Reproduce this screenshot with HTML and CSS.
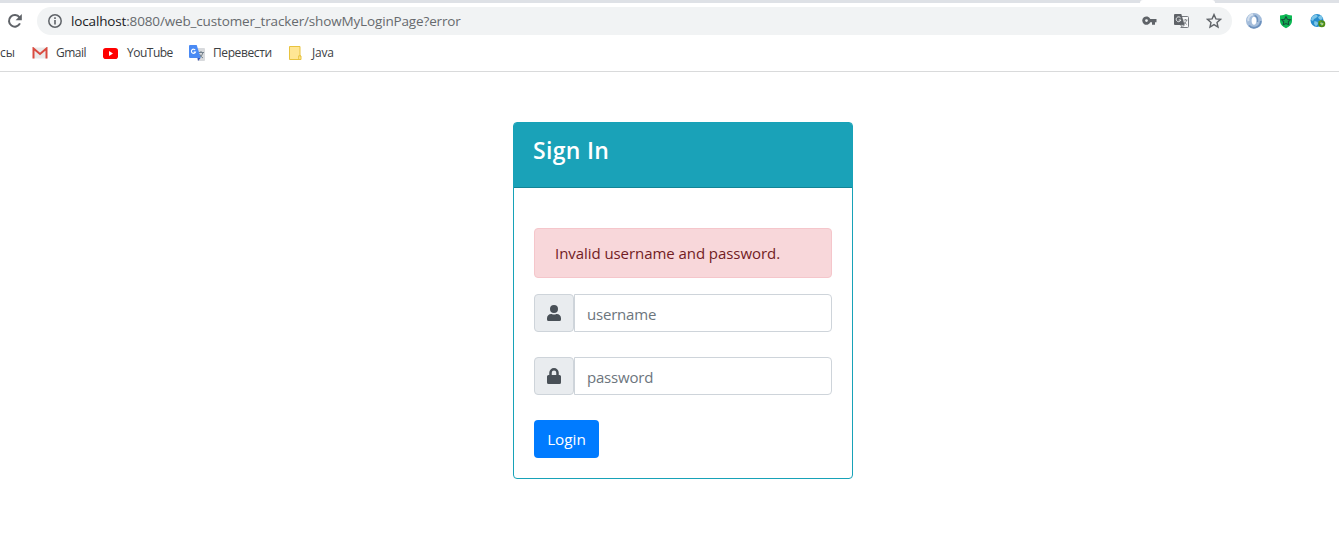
FILE: index.html
```html
<!DOCTYPE html>
<html lang="en">
<head>
<meta charset="utf-8">
<title>Sign In</title>
<link rel="stylesheet" href="styles.css">
</head>
<body>
<header class="browser">
  <div class="tabs"><span class="active-tab"></span></div>
  <div class="toolbar">
    <svg class="reload" width="16" height="16" viewBox="0 0 16 16"><path d="M13 10.4A5.800 5.800 0 1 1 12.500 4.400" fill="none" stroke="#5f6368" stroke-width="2"/><path d="M14.800 1v6.200H8.600z" fill="#5f6368"/></svg>
    <div class="omnibox">
      <svg class="info" width="14" height="14" viewBox="0 0 14 14"><circle cx="7" cy="7" r="6.200" fill="none" stroke="#5f6368" stroke-width="1.500"/><path d="M6.200 6h1.600v4.600H6.200zM6.200 3.300h1.600v1.600H6.200z" fill="#5f6368"/></svg>
      <span class="url"><span class="host">localhost</span>:8080/web_customer_tracker/showMyLoginPage?error</span>
      <div class="actions">
        <svg width="15" height="14" viewBox="0 0 15 14"><path fill="#5f6368" fill-rule="evenodd" d="M8.300 5a4.200 4.200 0 1 0 0 3.200H10v2.600h3V8.200h1.500V5zM4.500 5.200a1.400 1.400 0 1 1 0 2.800 1.400 1.400 0 0 1 0-2.800z"/></svg>
        <svg width="15" height="14" viewBox="0 0 15 14"><path d="M7 2.500h6.500q1 0 1 1v9q0 1-1 1H6.500" fill="#f7f8f9" stroke="#777b80"/><path d="M1 0h6.300l3.300 11H1q-1 0-1-1V1q0-1 1-1z" fill="#5f6368"/><path d="M6.500 3.800A2.400 2.400 0 1 0 6.900 6H4.700" fill="none" stroke="#f1f3f4"/><path d="M9.500 6h4M11.500 5v1M12.700 6q-.7 2.500-2.500 4M10 7.500q1 2 2.900 3M6.800 11h3.500L8 13.500z" fill="none" stroke="#777b80" stroke-width=".8"/></svg>
        <svg width="16" height="16" viewBox="0 0 16 16"><path d="M8 1.600l1.900 4.300 4.600.4L11 9.400l1 4.600-4-2.400L4 14l1-4.600-3.500-3.100 4.600-.4z" fill="none" stroke="#5f6368" stroke-width="1.400"/></svg>
      </div>
    </div>
    <div class="extensions">
      <svg width="16" height="16" viewBox="0 0 16 16"><path fill="#a4bddb" fill-rule="evenodd" d="M8 0a8 7.800 0 1 0 0 15.600A8 7.800 0 0 0 8 0zm0 3.800c3.200 0 3.200 8 0 8s-3.200-8 0-8z"/><path d="M3 12.500A6.800 6.800 0 0 0 14.800 8" fill="none" stroke="#6d91bd" stroke-width="1.800"/><path d="M7 1.600a5 5 0 0 0-4.500 6.500" fill="none" stroke="#d2dfee" stroke-width="2"/><path d="M8.500 2.500q3.800 1 3 6.500" fill="none" stroke="#6e92bd" stroke-width="1.400"/></svg>
      <svg width="14" height="16" viewBox="0 0 14 16"><path d="M1 2.500Q5 2.200 7 1q2 1.200 6 1.500V8q0 4.500-6 7.300Q1 12.500 1 8z" fill="#0db954"/><path d="M7 3.700l1.400 2.500 2.900.5-2 2.100.4 2.900L7 10.500l-2.700 1.200.4-2.900-2-2.100 2.900-.5z" fill="#13a951" stroke="#164f3b" stroke-width="1.100"/></svg>
      <svg width="16" height="16" viewBox="0 0 16 16"><circle cx="7" cy="7.500" r="6.500" fill="#268ccd"/><path d="M2 3.500l4-2 2 1.500-2 2-2 1-1 2-2-1zM8 4l3-2 2 3-2 2-2-1zM4.500 8l3 1 .5 2-2 2.300-2-2.300z" fill="#7ec6e8"/><circle cx="11.800" cy="10.700" r="2.500" fill="none" stroke="#4d8c16" stroke-width="2"/><path d="M8 8.500l3-1.500v3z" fill="#629e20"/><path d="M10.500 10l2.500 1.500" stroke="#b4d765" stroke-width="1.500"/></svg>
    </div>
  </div>
  <nav class="bookmarks">
    <span class="label cut">сы</span>
    <svg class="gmail" width="16" height="12" viewBox="0 0 16 12"><path d="M1 .5h14v11H1z" fill="#eaeaea"/><path d="M1.500 11.500V1.500L8 7l6.500-5.500v10" fill="none" stroke="#d94b40" stroke-width="2"/></svg>
    <span class="label w-gmail">Gmail</span>
    <svg class="youtube" width="15" height="11" viewBox="0 0 15 11"><rect width="15" height="11" rx="2.800" fill="#f00"/><path d="M6 3l4 2.500L6 8z" fill="#fff"/></svg>
    <span class="label w-youtube">YouTube</span>
    <svg class="translate" width="16" height="16" viewBox="0 0 16 16"><path d="M6 3h9q1 0 1 1v11q0 1-1 1H9z" fill="#d8dadd"/><path d="M9.500 7.500H15M12 6v1.500M14 7.500q-1 4-4 5.500M10.500 9q1 2.500 3.500 4" fill="none" stroke="#73818c"/><path d="M8.500 13h3L9 16z" fill="#3755b5"/><path d="M1 0h6.700l4 13H1q-1 0-1-1V1q0-1 1-1z" fill="#4a8af4"/><path d="M6.200 5A2.100 2.100 0 1 0 6.500 7H4.700" fill="none" stroke="#fff" stroke-width="1.100"/></svg>
    <span class="label w-translate">Перевести</span>
    <svg class="folder" width="13" height="14" viewBox="0 0 13 14"><path d="M.5.500h10.500v9.500h1v3.500H.5z" fill="#ffe694" stroke="#e8c33f"/><path d="M9.700 13V9.800H12" fill="none" stroke="#e8c33f"/></svg>
    <span class="label w-java">Java</span>
  </nav>
</header>
<main class="page">
  <section class="card">
    <div class="card-header"><h1 class="title">Sign In</h1></div>
    <form class="card-body">
      <div class="alert"><span class="alert-text">Invalid username and password.</span></div>
      <label class="group">
        <span class="addon"><svg width="14" height="16" viewBox="0 0 448 512"><path fill="#495057" d="M224 256a128 128 0 1 0 0-256 128 128 0 0 0 0 256zm90 32h-17a174 174 0 0 1-146 0h-17A134 134 0 0 0 0 422v42a48 48 0 0 0 48 48h352a48 48 0 0 0 48-48v-42a134 134 0 0 0-134-134z"/></svg></span>
        <input class="field user" type="text" placeholder="username">
      </label>
      <label class="group">
        <span class="addon"><svg width="14" height="16" viewBox="0 0 448 512"><path fill="#495057" fill-rule="evenodd" d="M400 224h-24v-72a152 152 0 0 0-304 0v72H48a48 48 0 0 0-48 48v192a48 48 0 0 0 48 48h352a48 48 0 0 0 48-48V272a48 48 0 0 0-48-48zm-104 0H152v-72a72 72 0 0 1 144 0z"/></svg></span>
        <input class="field pass" type="password" placeholder="password">
      </label>
      <button class="login" type="button"><span class="login-text">Login</span></button>
    </form>
  </section>
</main>
</body>
</html>
```
FILE: styles.css
```css
* { box-sizing: border-box; }
body { margin: 0; height: 533px; overflow: hidden; background: #fff; font-family: "Open Sans", "Noto Sans", sans-serif; }
svg { display: block; flex: none; }
.browser { height: 72px; border-bottom: 1px solid #d9dadb; }
.tabs { height: 3px; padding-left: 1140px; background: #dee1e6; }
.active-tab { display: block; width: 75px; height: 3px; background: #fff; border-radius: 3px 3px 0 0; }
.toolbar { display: flex; align-items: center; height: 36px; padding-left: 7px; }
.omnibox { display: flex; align-items: center; width: 1195px; height: 28px; margin-left: 14px; padding: 0 10px 0 11px; background: #f1f3f4; border-radius: 14px; }
.url { margin-left: 9px; font-size: 13.5px; letter-spacing: -0.15px; color: #666a6e; white-space: nowrap; }
.host { color: #202124; }
.actions { display: flex; align-items: center; gap: 17px; margin-left: auto; }
.extensions { display: flex; align-items: center; gap: 17px; margin-left: 14px; }
.bookmarks { display: flex; align-items: center; height: 28px; }
.label { font-size: 12px; line-height: 16px; color: #3c4043; white-space: nowrap; }
.cut { width: 15px; margin-left: 0; }
.gmail { margin-left: 17px; }
.w-gmail { width: 31px; margin-left: 8px; letter-spacing: -0.5px; }
.youtube { margin-left: 16px; }
.w-youtube { width: 47px; margin-left: 9px; letter-spacing: -0.5px; }
.translate { margin-left: 15px; }
.w-translate { width: 60px; margin-left: 8px; letter-spacing: -0.4px; }
.folder { margin-left: 16px; }
.w-java { margin-left: 10px; letter-spacing: -0.2px; }
.page { padding-top: 50px; }
.card { width: 340px; height: 357px; margin-left: 513px; border: 1px solid #17a2b8; border-radius: 4px; }
.card-header { height: 65px; padding: 10px 19px; background: #1aa2b8; border-bottom: 1px solid #138496; border-radius: 2px 2px 0 0; }
.title { margin: 0; font-size: 23px; font-weight: 600; letter-spacing: 0.3px; line-height: 34px; color: #fff; }
.card-body { padding: 40px 20px 0; }
.alert { height: 50px; padding: 0 20px; line-height: 48px; letter-spacing: -0.06px; color: #721c24; background: #f8d7da; border: 1px solid #f5c6cb; border-radius: 4px; font-size: 15px; white-space: nowrap; }
.group { display: flex; height: 38px; margin-top: 16px; }
.group + .group { margin-top: 25px; }
.addon { display: flex; align-items: center; justify-content: center; width: 40px; padding-right: 1px; background: #e9ecef; border: 1px solid #ced4da; border-radius: 4px; }
.field { flex: 1; min-width: 0; padding: 2px 12px 0; border: 1px solid #ced4da; border-radius: 0 4px 4px 0; font-family: inherit; font-size: 15px; letter-spacing: -0.2px; outline: 0; }
.field::placeholder { color: #6c757d; opacity: 1; }
.login { width: 65px; height: 38px; margin-top: 25px; padding: 0; color: #fff; background: #007bff; border: 0; border-radius: 4px; font-family: inherit; font-size: 15.3px; }
```
